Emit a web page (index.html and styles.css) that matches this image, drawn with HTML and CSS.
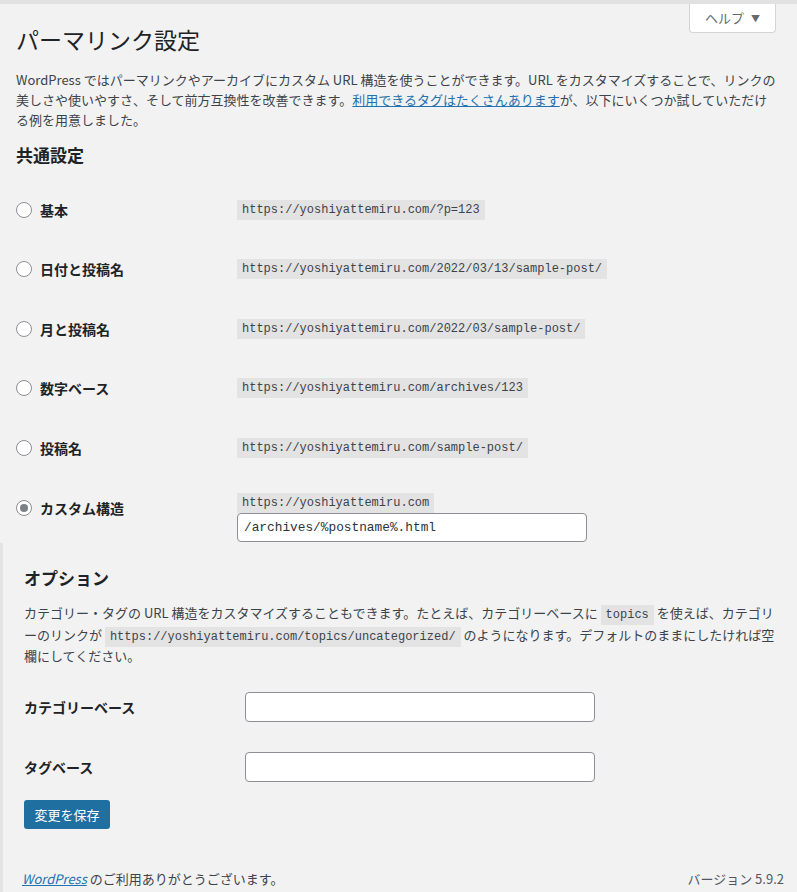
FILE: index.html
```html
<!DOCTYPE html>
<html lang="ja">
<head>
<meta charset="utf-8">
<title>パーマリンク設定</title>
<link rel="stylesheet" href="styles.css">
</head>
<body>
<div class="topbar"></div>
<div class="page">
  <div class="upper">
    <div class="header">
      <h1 class="title">パーマリンク設定</h1>
      <button class="help" type="button">ヘルプ <span class="caret">▼</span></button>
    </div>
    <p class="intro">WordPress ではパーマリンクやアーカイブにカスタム URL 構造を使うことができます。URL をカスタマイズすることで、リンクの<br>美しさや使いやすさ、そして前方互換性を改善できます。<a href="#" class="link">利用できるタグはたくさんあります</a>が、以下にいくつか試していただけ<br>る例を用意しました。</p>
    <h2 class="section-title">共通設定</h2>
    <div class="rows">
      <div class="row">
        <label class="opt"><span class="radio"></span>基本</label>
        <div class="val"><code class="code">https://yoshiyattemiru.com/?p=123</code></div>
      </div>
      <div class="row">
        <label class="opt"><span class="radio"></span>日付と投稿名</label>
        <div class="val"><code class="code">https://yoshiyattemiru.com/2022/03/13/sample-post/</code></div>
      </div>
      <div class="row">
        <label class="opt"><span class="radio"></span>月と投稿名</label>
        <div class="val"><code class="code">https://yoshiyattemiru.com/2022/03/sample-post/</code></div>
      </div>
      <div class="row">
        <label class="opt"><span class="radio"></span>数字ベース</label>
        <div class="val"><code class="code">https://yoshiyattemiru.com/archives/123</code></div>
      </div>
      <div class="row">
        <label class="opt"><span class="radio"></span>投稿名</label>
        <div class="val"><code class="code">https://yoshiyattemiru.com/sample-post/</code></div>
      </div>
      <div class="row row-custom">
        <label class="opt opt-custom"><span class="radio checked"></span>カスタム構造</label>
        <div class="val val-custom">
          <code class="code">https://yoshiyattemiru.com</code>
          <div class="input input-custom">/archives/%postname%.html</div>
        </div>
      </div>
    </div>
  </div>
  <div class="lower">
    <h2 class="section-title opt-title">オプション</h2>
    <p class="desc">カテゴリー・タグの URL 構造をカスタマイズすることもできます。たとえば、カテゴリーベースに <code class="code code-inline">topics</code> を使えば、カテゴリ<br>ーのリンクが <code class="code code-inline">https://yoshiyattemiru.com/topics/uncategorized/</code> のようになります。デフォルトのままにしたければ空<br>欄にしてください。</p>
    <div class="field">
      <span class="field-label">カテゴリーベース</span>
      <div class="input"></div>
    </div>
    <div class="field">
      <span class="field-label">タグベース</span>
      <div class="input"></div>
    </div>
    <button class="save" type="button">変更を保存</button>
    <div class="footer">
      <span><a href="#" class="foot-link">WordPress</a> のご利用ありがとうございます。</span>
      <span class="version">バージョン 5.9.2</span>
    </div>
  </div>
</div>
</body>
</html>
```

FILE: styles.css
```css
html, body {
  margin: 0;
  padding: 0;
  background: #f2f2f2;
  height: 892px;
  overflow: hidden;
}
body {
  font-family: "Noto Sans CJK JP", "Noto Sans", sans-serif;
  font-size: 13px;
  color: #3c434a;
}
.topbar {
  height: 4px;
  background: #e1e1e1;
}
.page {
  display: flex;
  flex-direction: column;
  height: 888px;
}
.upper {
  padding: 0 20px 0 16px;
}
.header {
  display: flex;
  justify-content: space-between;
  align-items: flex-start;
}
.title {
  margin: 20px 0 0;
  font-size: 23px;
  font-weight: 400;
  line-height: 30px;
  color: #1d2327;
}
.help {
  margin: 0 1px 0 0;
  width: 87px;
  height: 29px;
  background: #fff;
  border: 1px solid #d4d4d6;
  border-top: none;
  border-radius: 0 0 4px 4px;
  font-family: inherit;
  font-size: 13px;
  color: #646970;
  padding: 0 0 2px;
  cursor: pointer;
}
.caret {
  font-size: 9px;
  margin-left: 4px;
  position: relative;
  top: -1px;
}
.intro {
  margin: 16px 0 0;
  line-height: 20px;
  white-space: nowrap;
}
.link {
  color: #2271b1;
  text-decoration: underline;
}
.section-title {
  margin: 14px 0 0;
  font-size: 17px;
  font-weight: 700;
  line-height: 22px;
  color: #1d2327;
}
.rows {
  margin-top: 13.5px;
}
.row {
  display: flex;
  align-items: flex-start;
  padding: 20px 0 19.5px;
}
.row-custom {
  padding-top: 15.5px;
  padding-bottom: 0;
}
.opt {
  width: 221px;
  flex: none;
  display: flex;
  align-items: center;
  font-size: 14px;
  font-weight: 700;
  line-height: 20px;
  color: #1d2327;
}
.opt-custom {
  margin-top: 5px;
}
.radio {
  width: 14px;
  height: 14px;
  border: 1px solid #8c8f94;
  border-radius: 50%;
  background: #fff;
  margin-right: 8px;
  display: flex;
  align-items: center;
  justify-content: center;
}
.radio.checked::before {
  content: "";
  width: 8px;
  height: 8px;
  border-radius: 50%;
  background: #7e8287;
}
.val {
  display: flex;
  flex-direction: column;
  align-items: flex-start;
}
.code {
  display: inline-block;
  font-family: "Liberation Mono", "DejaVu Sans Mono", monospace;
  font-size: 12px;
  line-height: 20px;
  padding: 0 5px;
  background: #e3e3e3;
  color: #3c434a;
}
.input {
  box-sizing: border-box;
  width: 350px;
  height: 30px;
  background: #fff;
  border: 1px solid #8c8f94;
  border-radius: 4px;
}
.input-custom {
  height: 29px;
  padding: 0 6px;
  font-family: "Liberation Mono", "DejaVu Sans Mono", monospace;
  font-size: 12.8px;
  line-height: 27px;
  color: #2c3338;
}
.lower {
  flex: 1;
  margin-top: 1.5px;
  border-left: 3px solid #e4e4e4;
  padding: 24px 17px 0 21px;
  display: flex;
  flex-direction: column;
  align-items: flex-start;
  background-image: linear-gradient(#8a8a8a, #8a8a8a), linear-gradient(#8a8a8a, #8a8a8a);
  background-size: 3px 12px, 3px 10px;
  background-position: 0 210px, 0 234px;
  background-repeat: no-repeat;
  background-origin: border-box;
}
.opt-title {
  margin-top: 0;
}
.desc {
  margin: 13px 0 0;
  line-height: 21.5px;
  white-space: nowrap;
}
.code-inline {
  display: inline;
  line-height: 14px;
  padding: 3px 5px;
}
.field {
  display: flex;
  align-items: center;
  padding: 15px 0;
}
.field:first-of-type {
  margin-top: 10px;
}
.field-label {
  width: 221px;
  flex: none;
  font-size: 14px;
  font-weight: 700;
  color: #1d2327;
}
.save {
  margin-top: 3px;
  width: 86px;
  height: 29px;
  background: #1f6fa0;
  color: #fff;
  border: none;
  border-radius: 3px;
  font-family: inherit;
  font-size: 13px;
  padding: 0;
  cursor: pointer;
}
.footer {
  margin-top: auto;
  margin-left: -2px;
  align-self: stretch;
  display: flex;
  justify-content: space-between;
  line-height: 20px;
  padding-bottom: 3px;
  margin-right: -4px;
}
.foot-link {
  color: #2271b1;
  font-style: italic;
  text-decoration: underline;
}
.version {
  color: #50575e;
}
```
